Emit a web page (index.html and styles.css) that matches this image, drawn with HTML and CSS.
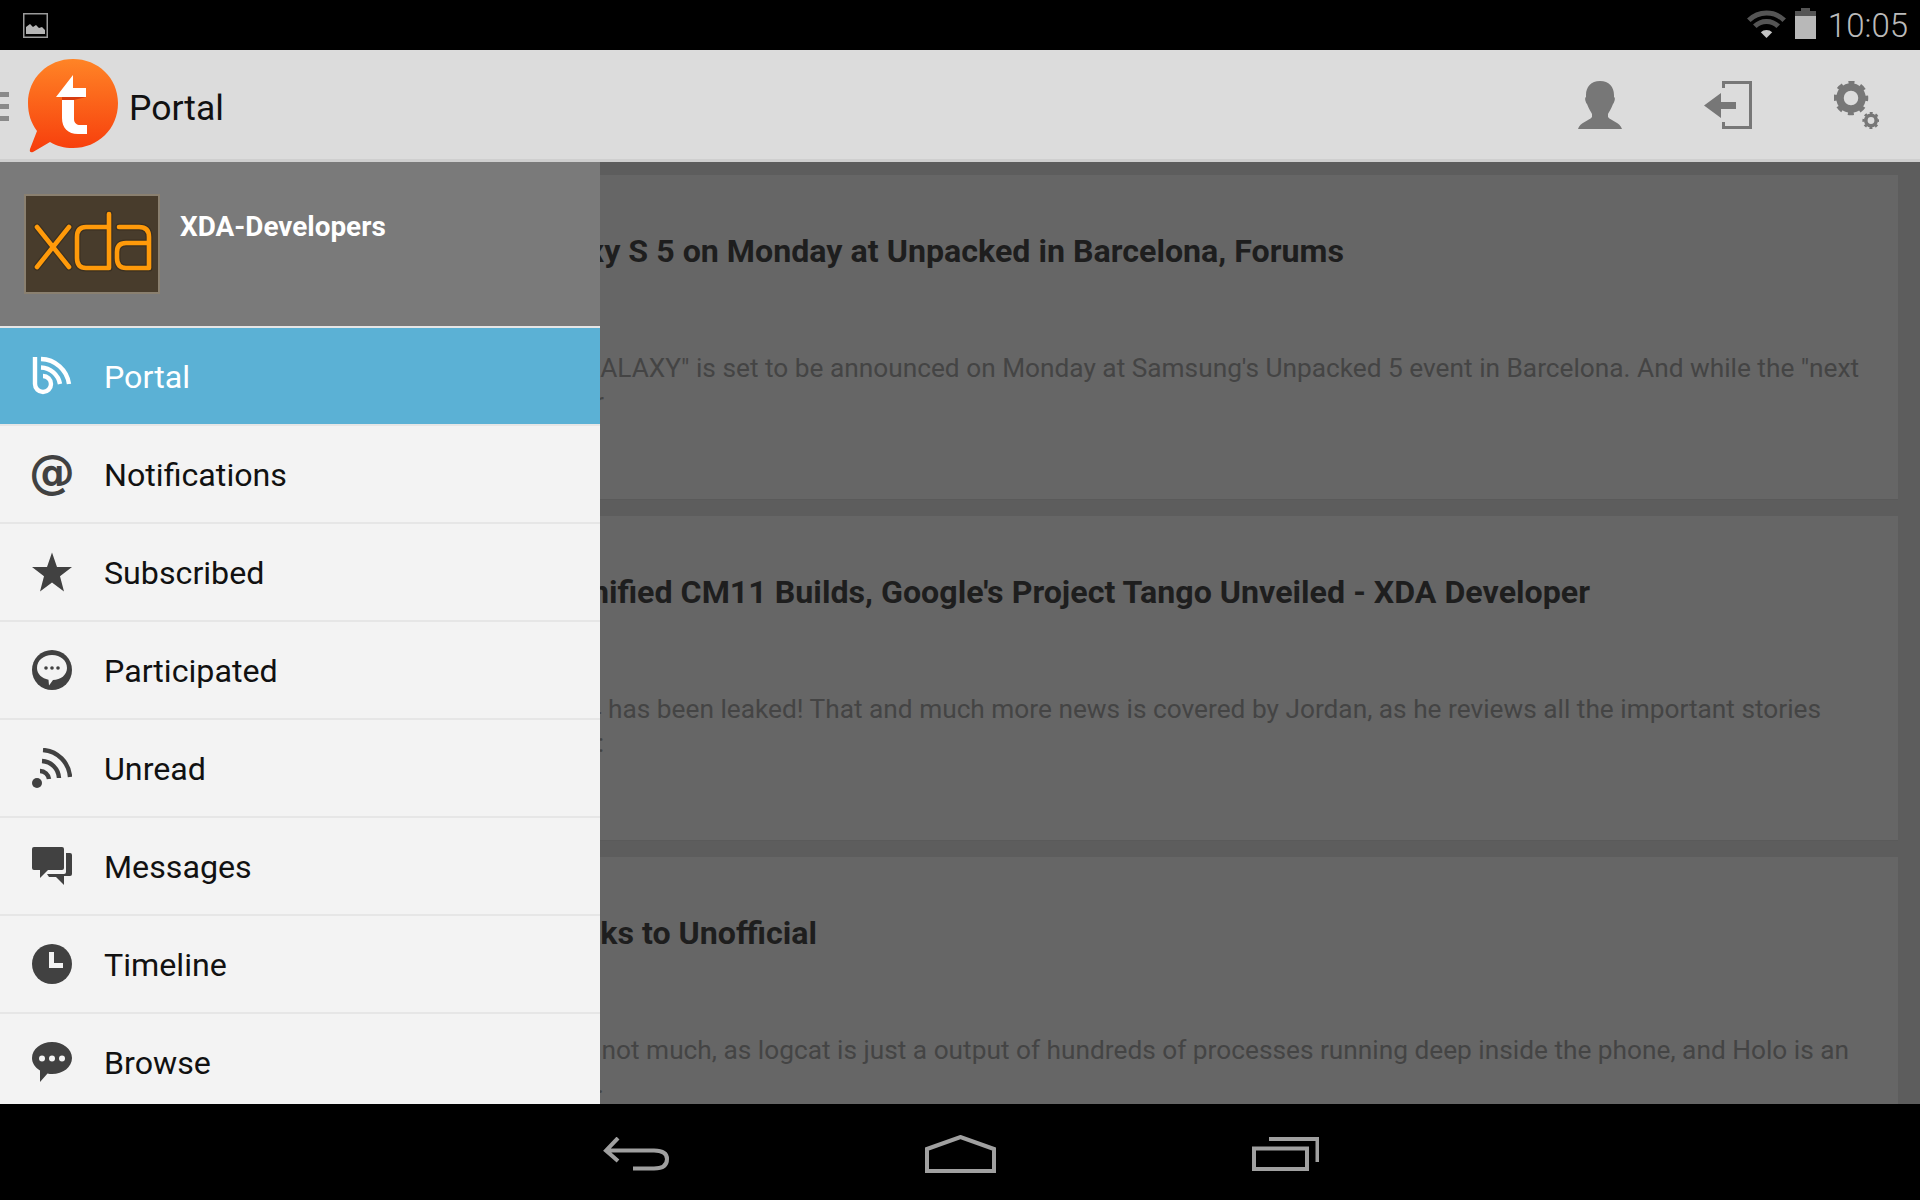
FILE: index.html
```html
<!DOCTYPE html>
<html lang="en">
<head>
  <meta charset="UTF-8">
  <meta name="viewport" content="width=device-width, initial-scale=1.0">
  <title>Portal</title>
  <link rel="stylesheet" href="styles.css">
</head>
<body>

  <!-- android status bar -->
  <div class="status-bar">
    <svg class="status-image" viewBox="0 0 25 25">
      <rect x="0.75" y="0.75" width="23.5" height="23.5" fill="none" stroke="#9a9a9a" stroke-width="1.5"/>
      <path d="M3 21 V14 L7 11 L10 14 L13 12 L16 15 L19 14 L22 17 V21 Z" fill="#b5b5b5"/>
    </svg>
    <div class="status-right">
      <svg class="wifi" viewBox="0 0 39 30">
        <path d="M1.8 11.3 A25 25 0 0 1 37.2 11.3" fill="none" stroke="#555" stroke-width="5"/>
        <path d="M7.8 17.3 A16.5 16.5 0 0 1 31.2 17.3" fill="none" stroke="#555" stroke-width="5"/>
        <path d="M19.5 29 L13.8 23.3 A8 8 0 0 1 25.2 23.3 Z" fill="#c4c4c4"/>
      </svg>
      <svg class="battery" viewBox="0 0 21 31">
        <path d="M6 0 H15 V3 H21 V8 H0 V3 H6 Z" fill="#555"/>
        <rect y="8" width="21" height="23" fill="#b8b8b8"/>
      </svg>
      <span class="clock">10:05</span>
    </div>
  </div>

  <!-- action bar -->
  <header class="action-bar">
    <div class="hamburger"><i></i><i></i><i></i></div>
    <svg class="logo" viewBox="22 56 100 100">
      <defs>
        <linearGradient id="logoFill" x1="0" y1="0" x2="0" y2="1">
          <stop offset="0" stop-color="#ff8426"/>
          <stop offset="1" stop-color="#f73d0c"/>
        </linearGradient>
      </defs>
      <path d="M73 59 C98 59 118 78 118 103 C118 129 98 148 73 148 C64 148 57 146 50 142 L33 152 Q29 153 30 149 L37 131 C31 123 28 114 28 103 C28 78 48 59 73 59 Z" fill="url(#logoFill)"/>
      <path d="M73 75 V88 H86 V97 H56 Z" fill="#fff"/>
      <path d="M62 99 L74 98 V119 C74 123 77 125 80 125 H87 V134 H78 C68 134 62 128 62 118 Z" fill="#fff"/>
      <path d="M62 97 H86 L74 100 H62 Z" fill="#d63c10"/>
    </svg>
    <h1 class="page-title">Portal</h1>
    <div class="actions">
      <svg class="action-person" viewBox="0 0 44 48">
        <path d="M22 0 C31 0 36 6 36 14 L36 16 C38 17 36 22 35 23 C33 28 31 31 30 33 L30 36 C33 40 42 41 44 48 L0 48 C2 41 11 40 14 36 L14 33 C13 31 11 28 9 23 C8 22 6 17 8 16 L8 14 C8 6 13 0 22 0 Z"/>
      </svg>
      <svg class="action-login" viewBox="0 0 48 48">
        <path d="M18 0 H48 V48 H18 V41 H21 V45 H45 V3 H21 V7 H18 Z"/>
        <path d="M0 24.5 L17 12 V21 H32 V28 H17 V37 Z"/>
      </svg>
      <svg class="action-gears" viewBox="0 0 45 48">
        <circle cx="17" cy="17" r="11" fill="none" stroke="#777" stroke-width="7.5"/>
        <circle cx="17" cy="17" r="15" fill="none" stroke="#777" stroke-width="4.5" stroke-dasharray="5.8 5.98" stroke-dashoffset="2.9"/>
        <circle cx="37" cy="39.5" r="5.2" fill="none" stroke="#777" stroke-width="3.6"/>
        <circle cx="37" cy="39.5" r="7.5" fill="none" stroke="#777" stroke-width="2.2" stroke-dasharray="2.9 2.99" stroke-dashoffset="1.45"/>
      </svg>
    </div>
  </header>

  <main class="content">
    <div class="cards">
      <article class="card">
        <h2 class="card-title end-title-1">Galaxy S 5 on Monday at Unpacked in Barcelona, Forums</h2>
        <p class="card-text end-text-1">The "next GALAXY" is set to be announced on Monday at Samsung's Unpacked 5 event in Barcelona. And while the "next</p>
        <p class="card-more">GALAXY" for</p>
      </article>
      <article class="card">
        <h2 class="card-title end-title-2">Unified CM11 Builds, Google's Project Tango Unveiled - XDA Developer</h2>
        <p class="card-text end-text-2">Galaxy S4 has been leaked! That and much more news is covered by Jordan, as he reviews all the important stories</p>
        <p class="card-more">of the week:</p>
      </article>
      <article class="card">
        <h2 class="card-title end-title-3">Thanks to Unofficial</h2>
        <p class="card-text end-text-3">It is not much, as logcat is just a output of hundreds of processes running deep inside the phone, and Holo is an</p>
        <p class="card-more">easy read.</p>
      </article>
    </div>

    <!-- slide out drawer over the content -->
    <aside class="drawer">
      <div class="drawer-head">
        <svg class="forum-thumb" viewBox="0 0 136 100">
          <rect x="1" y="1" width="134" height="98" fill="#483c2c" stroke="#8a8070" stroke-width="2"/>
          <g fill="none" stroke="#2e2518" stroke-width="7" stroke-linecap="round" stroke-linejoin="round" opacity="0.5">
            <path d="M13 33 L45 73 M45 33 L13 73"/>
            <path d="M85 20 V74 H62 Q53 74 53 64 V43 Q53 33 62 33 H85"/>
            <path d="M95 33 H115 Q125 33 125 43 V74 H102 Q93 74 93 64 V58 Q93 49 102 49 H125"/>
          </g>
          <g fill="none" stroke="#ff9a0a" stroke-width="4.6" stroke-linecap="round" stroke-linejoin="round">
            <path d="M13 33 L45 73 M45 33 L13 73"/>
            <path d="M85 20 V74 H62 Q53 74 53 64 V43 Q53 33 62 33 H85"/>
            <path d="M95 33 H115 Q125 33 125 43 V74 H102 Q93 74 93 64 V58 Q93 49 102 49 H125"/>
          </g>
        </svg>
        <div class="forum-name">XDA-Developers</div>
      </div>
      <ul class="menu">
        <li class="menu-item active">
          <svg class="menu-icon" viewBox="0 0 40 40">
            <g fill="none" stroke="#fff" stroke-width="4.4">
              <path d="M3 1 V28 A8 8 0 1 0 11 20"/>
              <path d="M9 11.5 A20 20 0 0 1 28 28"/>
              <path d="M9 3 A29 29 0 0 1 37 28"/>
            </g>
          </svg>
          <span class="menu-label">Portal</span>
        </li>
        <li class="menu-item">
          <span class="menu-icon at-sign">@</span>
          <span class="menu-label">Notifications</span>
        </li>
        <li class="menu-item">
          <svg class="menu-icon" viewBox="0 0 40 40">
            <path d="M20 0.5 L25 15 H40 L28 24.3 L32 39.5 L20 30.5 L8 39.5 L12 24.3 L0 15 H15 Z"/>
          </svg>
          <span class="menu-label">Subscribed</span>
        </li>
        <li class="menu-item">
          <svg class="menu-icon" viewBox="0 0 40 40">
            <circle cx="20" cy="20" r="20"/>
            <path d="M20 5 C28.5 5 35 10.5 35 18 C35 25 28.5 30 21 30 L17 35.5 L16.5 29.7 C10 28.5 5 24 5 18 C5 10.5 11.5 5 20 5 Z" fill="#f3f3f3"/>
            <circle cx="14" cy="18" r="1.8"/><circle cx="20" cy="18" r="1.8"/><circle cx="26" cy="18" r="1.8"/>
          </svg>
          <span class="menu-label">Participated</span>
        </li>
        <li class="menu-item">
          <svg class="menu-icon" viewBox="0 0 40 40">
            <circle cx="5" cy="35" r="5"/>
            <g fill="none" stroke="#414141" stroke-width="4.4">
              <path d="M11 2 A29 29 0 0 1 38 29"/>
              <path d="M10 13 A18 18 0 0 1 27 30"/>
              <path d="M8 23 A9 9 0 0 1 17 31"/>
            </g>
          </svg>
          <span class="menu-label">Unread</span>
        </li>
        <li class="menu-item">
          <svg class="menu-icon" viewBox="0 0 40 40">
            <path d="M2 1 H30 Q32 1 32 3 V22 Q32 24 30 24 H16 L8 32 V24 H2 Q0 24 0 22 V3 Q0 1 2 1 Z"/>
            <path d="M34 7 H38 Q40 7 40 9 V28 Q40 30 38 30 H32 V39 L24 31 H17 L15 28 H32 Q34 28 34 26 Z"/>
          </svg>
          <span class="menu-label">Messages</span>
        </li>
        <li class="menu-item">
          <svg class="menu-icon" viewBox="0 0 40 40">
            <circle cx="20" cy="20" r="20"/>
            <path d="M17 8 H22 V19 H31 V24 H17 Z" fill="#f3f3f3"/>
          </svg>
          <span class="menu-label">Timeline</span>
        </li>
        <li class="menu-item">
          <svg class="menu-icon" viewBox="0 0 40 40">
            <path d="M20 0 C31 0 40 7 40 16 C40 25 31 32 20 32 C18.5 32 17 31.9 15.5 31.5 L8 40 V28.5 C3 25.5 0 21 0 16 C0 7 9 0 20 0 Z"/>
            <circle cx="10" cy="16.5" r="3" fill="#f3f3f3"/><circle cx="20" cy="16.5" r="3" fill="#f3f3f3"/><circle cx="30" cy="16.5" r="3" fill="#f3f3f3"/>
          </svg>
          <span class="menu-label">Browse</span>
        </li>
      </ul>
    </aside>
  </main>

  <!-- android nav bar -->
  <div class="nav-bar">
    <svg class="nav-back" viewBox="0 0 66 34">
      <path d="M15 1 L3 13.5 L15 24 M3 13.5 H51 Q64 13.5 64 22 Q64 31.5 51 31.5 H30"/>
    </svg>
    <svg class="nav-home" viewBox="0 0 71 38">
      <path d="M2 14 L35.5 2 L69 14 V36 H2 Z"/>
    </svg>
    <svg class="nav-recent" viewBox="0 0 67 34">
      <path d="M2 11.5 H55 V32 H2 Z M17 2 H65.5 V25"/>
    </svg>
  </div>

</body>
</html>
```

FILE: styles.css
```css
html, body {
  margin: 0;
  padding: 0;
}

body {
  width: 1920px;
  height: 1200px;
  display: flex;
  flex-direction: column;
  overflow: hidden;
  background: #000;
  font-family: Roboto, "Liberation Sans", sans-serif;
}

/* status bar */
.status-bar {
  height: 50px;
  flex: none;
  display: flex;
  align-items: center;
  justify-content: space-between;
  padding: 0 12px 0 23px;
}
.status-image {
  width: 25px;
  height: 25px;
}
.status-right {
  display: flex;
  align-items: center;
}
.wifi {
  width: 39px;
  height: 30px;
  margin-top: -2px;
}
.battery {
  width: 21px;
  height: 31px;
  margin: -3px 12px 0 9px;
}
.clock {
  color: #bbb;
  font-size: 33px;
  font-weight: 300;
  line-height: 50px;
  padding-top: 2px;
}

/* action bar */
.action-bar {
  height: 109px;
  flex: none;
  display: flex;
  align-items: center;
  background: #dcdcdc;
  border-bottom: 3px solid #cfcfcf;
}
.hamburger {
  width: 9px;
  display: flex;
  flex-direction: column;
  gap: 7px;
  margin-top: 3px;
}
.hamburger i {
  display: block;
  height: 5px;
  background: #8a8a8a;
}
.logo {
  width: 100px;
  height: 100px;
  margin: 3px 0 0 13px;
}
.page-title {
  margin: 6px 0 0 7px;
  font-size: 35.5px;
  font-weight: 400;
  color: #111;
}
.actions {
  margin-left: auto;
  margin-right: 41px;
  display: flex;
  gap: 82px;
  fill: #777;
}
.action-person { width: 44px; height: 48px; }
.action-login { width: 48px; height: 48px; }
.action-gears { width: 45px; height: 48px; }

/* content behind the drawer, dimmed */
.content {
  flex: 1;
  position: relative;
  overflow: hidden;
  background: #5d5d5d;
}
.cards {
  display: flex;
  flex-direction: column;
  gap: 16px;
  padding: 13px 22px 0;
}
.card {
  height: 325px;
  flex: none;
  padding: 56px 0 0 400px;
  box-sizing: border-box;
  background: #666;
  border-bottom: 1px solid #5a5a5a;
  white-space: nowrap;
  text-align: right;
}
.card-title {
  margin: 0;
  font-size: 32.2px;
  font-weight: 700;
  line-height: 40px;
  color: #1e1e1e;
}
.card-text {
  margin: 80px 0 0;
  font-size: 26.25px;
  line-height: 34px;
  color: #444;
}
.card-more {
  margin: 0;
  padding-right: 1294px;
  font-size: 26.25px;
  line-height: 34px;
  color: #444;
}

/* where each line stops, measured from the card's right edge */
.end-title-1 { padding-right: 554px; }
.end-title-2 { padding-right: 308px; }
.end-title-3 { padding-right: 1081px; }
.end-text-1 { padding-right: 39px; }
.end-text-2 { padding-right: 77px; }
.end-text-3 { padding-right: 49px; }

/* drawer */
.drawer {
  position: absolute;
  top: 0;
  left: 0;
  bottom: 0;
  width: 600px;
  overflow: hidden;
  background: #f3f3f3;
}
.drawer-head {
  height: 132px;
  padding: 32px 0 0 24px;
  display: flex;
  gap: 20px;
  background: #7a7a7a;
  border-bottom: 2px solid #e6e6e6;
}
.forum-thumb {
  width: 136px;
  height: 100px;
}
.forum-name {
  margin-top: 17px;
  font-size: 27.9px;
  font-weight: 700;
  line-height: 32px;
  color: #fff;
}
.menu {
  margin: 0;
  padding: 0;
  list-style: none;
}
.menu-item {
  height: 96px;
  display: flex;
  align-items: center;
  gap: 32px;
  padding-left: 32px;
  font-size: 32.2px;
  color: #111;
  border-bottom: 2px solid #e6e6e6;
}
.menu-item.active {
  background: #5bb1d5;
  color: #fff;
}
.menu-label {
  padding-top: 2px;
}
.menu-icon {
  width: 40px;
  height: 40px;
  flex: none;
  fill: #414141;
}
.at-sign {
  font-family: "DejaVu Sans", sans-serif;
  font-size: 46px;
  font-weight: 700;
  line-height: 36px;
  color: #414141;
  display: flex;
  justify-content: center;
}

/* nav bar */
.nav-bar {
  height: 92px;
  flex: none;
  display: flex;
  align-items: center;
  justify-content: center;
  gap: 256px;
  padding: 4px 0 0 2px;
}
.nav-bar svg {
  fill: none;
  stroke: #a0a0a0;
  stroke-width: 4;
}
.nav-back { width: 66px; height: 34px; }
.nav-home { width: 71px; height: 38px; }
.nav-recent { width: 67px; height: 34px; }
```
